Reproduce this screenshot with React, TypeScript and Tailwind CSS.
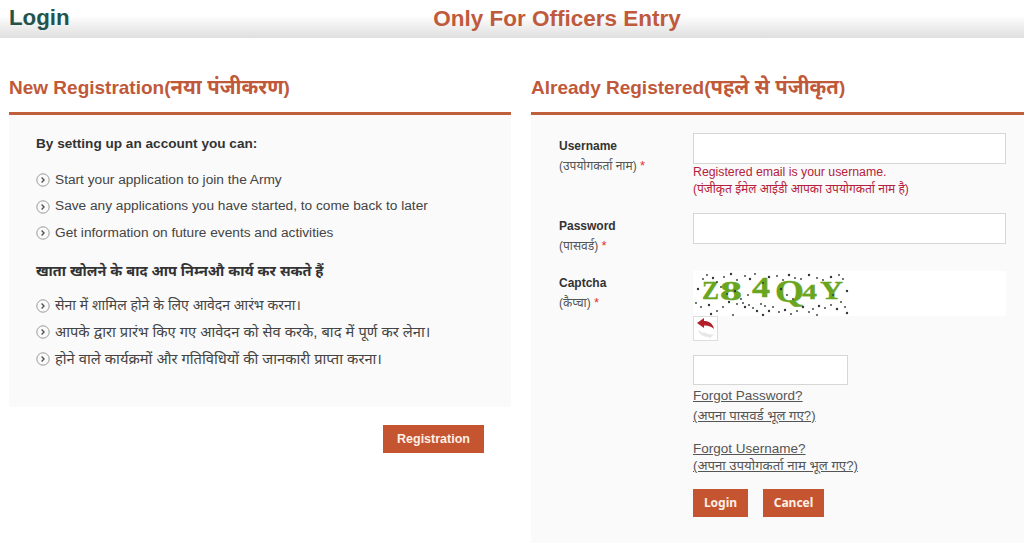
const sans = "font-['Liberation_Sans','Noto_Sans',sans-serif]";

const dots: [number, number][] = [
  [5,18],[10,8],[14,4],[20,7],[24,11],[31,6],[38,3],[44,9],[52,5],[57,8],[62,3],[70,12],[76,6],[84,5],[90,9],[96,4],[102,7],[108,8],[116,4],[124,7],[130,9],[138,6],[146,4],[150,8],[154,20],
  [3,32],[8,36],[16,34],[24,40],[30,36],[36,31],[44,33],[50,32],[52,36],[56,34],[60,37],[64,40],[68,33],[72,35],[76,40],[80,36],[86,41],[92,39],[98,43],[104,40],[110,36],[116,41],[120,38],[126,35],[132,37],[138,34],[144,38],[148,31],[152,36],[154,42],
  [28,16],[34,23],[42,20],[48,28],[55,24],[88,18],[94,24],[100,28],[18,43],[40,44],[124,44],[70,44],[140,24]
];

function Captcha() {
  return (
    <svg width="158" height="45" viewBox="0 0 158 45" className="block">
      <g fontFamily="'Liberation Serif',serif" fontWeight="700" fill="#6aa51f" stroke="#6aa51f" strokeWidth="0.4">
        <text x="9" y="28" fontSize="25" textLength="17" lengthAdjust="spacingAndGlyphs">Z</text>
        <text x="27" y="29" fontSize="27" textLength="22" lengthAdjust="spacingAndGlyphs">8</text>
        <text x="59" y="26" fontSize="29" textLength="18" lengthAdjust="spacingAndGlyphs">4</text>
        <text x="82" y="31" fontSize="31" textLength="29" lengthAdjust="spacingAndGlyphs">Q</text>
        <text x="109" y="28" fontSize="22" textLength="15" lengthAdjust="spacingAndGlyphs">4</text>
        <text x="127" y="28" fontSize="26" textLength="23" lengthAdjust="spacingAndGlyphs">Y</text>
      </g>
      {dots.map(([x, y], i) => (
        <circle key={i} cx={x} cy={y} r={i % 3 === 0 ? 1.2 : 0.9} fill="#2f3a30" />
      ))}
    </svg>
  );
}

function Bullet() {
  return (
    <svg width="14" height="14" viewBox="0 0 14 14" className="shrink-0">
      <circle cx="7" cy="7" r="6.2" fill="none" stroke="#9a9a9a" strokeWidth="1" />
      <path d="M5.6 4.6 8 7 5.6 9.4" fill="none" stroke="#555" strokeWidth="1.4" />
    </svg>
  );
}

function Item({ children, size }: { children: React.ReactNode; size: string }) {
  return (
    <li className={`flex items-center gap-[5px] h-[26.5px] ${size} text-[#444]`}>
      <Bullet />
      <span>{children}</span>
    </li>
  );
}

function Label({ en, hi, top }: { en: string; hi: string; top?: string }) {
  return (
    <div className={`w-[134px] shrink-0 ${top ?? ""}`}>
      <div className="text-[12px] leading-[14px] font-bold text-[#333]">{en}</div>
      <div className="mt-[5px] text-[12px] leading-[16px] text-[#555]">
        ({hi}) <span className="text-[#d33] text-[13px]">*</span>
      </div>
    </div>
  );
}

function Btn({ children, w, serif }: { children: React.ReactNode; w: string; serif?: boolean }) {
  return (
    <button className={`${w} h-[28px] bg-[#c55530] text-[#fdf0e6] font-bold ${serif ? "text-[12px] font-['Noto_Sans',sans-serif]" : "text-[12.5px]"}`}>
      {children}
    </button>
  );
}

export default function App() {
  return (
    <div className={`w-[1024px] h-[543px] overflow-hidden bg-white ${sans}`}>
      <header className="relative h-[38px] flex items-center justify-center bg-gradient-to-b from-white from-40% to-[#dfdfdf]">
        <span className="absolute left-[9px] top-[3px] text-[22.3px] leading-[30px] font-bold text-[#23544c]">Login</span>
        <span className="ml-[90px] text-[22.5px] leading-[38px] font-bold text-[#bf5a3c]">Only For Officers Entry</span>
      </header>

      <div className="flex items-start pl-[9px] gap-[20px]">
        <section className="w-[502px] shrink-0">
          <h2 className="h-[77px] pt-[33px] text-[19px] leading-[32px] font-bold text-[#c0593a] border-b-[3px] border-[#bf5f3c]">
            New Registration(<span className="text-[20.2px]">नया पंजीकरण</span>)
          </h2>
          <div className="h-[292px] bg-[#fafafa] pl-[27px] pt-[21px]">
            <p className="text-[13.6px] leading-[16px] font-bold text-[#333]">By setting up an account you can:</p>
            <ul className="mt-[15px]">
              <Item size="text-[13.7px]">Start your application to join the Army</Item>
              <Item size="text-[13.7px]">Save any applications you have started, to come back to later</Item>
              <Item size="text-[13.7px]">Get information on future events and activities</Item>
            </ul>
            <p className="mt-[14px] text-[14.4px] leading-[20px] font-bold text-[#333]">खाता खोलने के बाद आप निम्नऔ कार्य कर सकते हैं</p>
            <ul className="mt-[12px]">
              <Item size="text-[14px]">सेना में शामिल होने के लिए आवेदन आरंभ करना।</Item>
              <Item size="text-[14.7px]">आपके द्वारा प्रारंभ किए गए आवेदन को सेव करके, बाद में पूर्ण कर लेना।</Item>
              <Item size="text-[14.7px]">होने वाले कार्यक्रमों और गतिविधियों की जानकारी प्राप्ता करना।</Item>
            </ul>
          </div>
          <div className="flex justify-end pr-[27px] pt-[18px]">
            <Btn w="w-[101px]">Registration</Btn>
          </div>
        </section>

        <section className="flex-1">
          <h2 className="h-[77px] pt-[33px] text-[19px] leading-[32px] font-bold text-[#c0593a] border-b-[3px] border-[#bf5f3c]">
            Already Registered(<span className="text-[20.2px]">पहले से पंजीकृत</span>)
          </h2>
          <div className="h-[430px] bg-[#fafafa] pl-[28px] pr-[18px] pt-[18px]">
            <div className="flex">
              <Label en="Username" hi="उपयोगकर्ता नाम" top="pt-[6px]" />
              <div className="flex-1">
                <input className="block w-full h-[31px] bg-white border border-[#d6d6d6]" />
                <div className="-mt-[1px] text-[12.3px] leading-[18px] text-[#b5213c]">Registered email is your username.</div>
                <div className="text-[12px] leading-[16px] text-[#b5213c]">(पंजीकृत ईमेल आईडी आपका उपयोगकर्ता नाम है)</div>
              </div>
            </div>
            <div className="flex mt-[16px]">
              <Label en="Password" hi="पासवर्ड" top="pt-[6px]" />
              <div className="flex-1">
                <input className="block w-full h-[31px] bg-white border border-[#d6d6d6]" />
              </div>
            </div>
            <div className="flex mt-[21px]">
              <Label en="Captcha" hi="कैप्चा" top="pt-[1px]" />
              <div className="flex-1 -mt-[4px]">
                <div className="bg-white h-[45px]"><Captcha /></div>
                <div className="w-[25px] h-[25px] bg-white border border-[#ddd] flex items-center justify-center">
                  <svg width="20" height="22" viewBox="0 0 20 22">
                    <path d="M1 5 8 0v3c5 0 9 2.500 10 8-2.500-2.500-6-3.800-10-3.500V10z" fill="#b3202a" />
                    <path d="M2 12c1 4 5 7 11 7v2l5-5c-3 1-8 0-10-2l-1 1z" fill="#e6e6e6" />
                  </svg>
                </div>
                <input className="block mt-[14px] w-[155px] h-[30px] bg-white border border-[#d6d6d6]" />
                <a className="block mt-[2px] text-[13.5px] leading-[17px] text-[#555] underline">Forgot Password?</a>
                <a className="block mt-[2px] text-[13.2px] leading-[19px] text-[#555] underline">(अपना पासवर्ड भूल गए?)</a>
                <a className="block mt-[15px] text-[13.5px] leading-[17px] text-[#555] underline">Forgot Username?</a>
                <a className="block text-[13.2px] leading-[18px] text-[#555] underline">(अपना उपयोगकर्ता नाम भूल गए?)</a>
                <div className="flex gap-[15px] mt-[14px]">
                  <Btn w="w-[55px]" serif>Login</Btn>
                  <Btn w="w-[61px]" serif>Cancel</Btn>
                </div>
              </div>
            </div>
          </div>
        </section>
      </div>
    </div>
  );
}
